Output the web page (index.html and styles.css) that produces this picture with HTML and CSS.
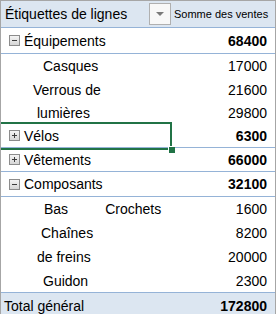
FILE: index.html
```html
<!DOCTYPE html>
<html lang="fr">
<head>
<meta charset="utf-8">
<link rel="stylesheet" href="styles.css">
</head>
<body>
<div class="pivot">
  <div class="row head">
    <div class="lab">Étiquettes de lignes</div>
    <div class="filter"><span class="arrow"></span></div>
    <div class="hval">Somme des ventes</div>
  </div>
  <div class="row grp r25">
    <div class="lab"><span class="tog minus"></span>Équipements</div>
    <div class="val bold">68400</div>
  </div>
  <div class="row r24">
    <div class="lab"><span class="child i42">Casques</span></div>
    <div class="val">17000</div>
  </div>
  <div class="row r23">
    <div class="lab"><span class="child i32">Verrous de</span></div>
    <div class="val">21600</div>
  </div>
  <div class="row r23">
    <div class="lab"><span class="child i36">lumières</span></div>
    <div class="val">29800</div>
  </div>
  <div class="row grp r23 selected">
    <div class="lab"><span class="tog plus"></span>Vélos</div>
    <div class="val bold">6300</div>
    <div class="sel"><span class="handle"></span></div>
  </div>
  <div class="row grp r23">
    <div class="lab"><span class="tog plus"></span>Vêtements</div>
    <div class="val bold">66000</div>
  </div>
  <div class="row grp r24">
    <div class="lab"><span class="tog minus"></span>Composants</div>
    <div class="val bold">32100</div>
  </div>
  <div class="row r24">
    <div class="lab"><span class="child i43">Bas</span><span class="extra">Crochets</span></div>
    <div class="val">1600</div>
  </div>
  <div class="row r24">
    <div class="lab"><span class="child i40">Chaînes</span></div>
    <div class="val">8200</div>
  </div>
  <div class="row r24">
    <div class="lab"><span class="child i36">de freins</span></div>
    <div class="val">20000</div>
  </div>
  <div class="row r23">
    <div class="lab"><span class="child i42">Guidon</span></div>
    <div class="val">2300</div>
  </div>
  <div class="row total">
    <div class="lab">Total général</div>
    <div class="val bold">172800</div>
  </div>
</div>
</body>
</html>
```

FILE: styles.css
```css
html, body {
  margin: 0;
  padding: 0;
  background: #ffffff;
}
.pivot {
  width: 274px;
  height: 313px;
  border-top: 1px solid #a6a6a6;
  border-left: 1px solid #a6a6a6;
  border-right: 1px solid #a6a6a6;
  font-family: "Liberation Sans", Arial, sans-serif;
  font-size: 14px;
  color: #000000;
  display: flex;
  flex-direction: column;
  overflow: hidden;
}
.row {
  display: flex;
  align-items: center;
  position: relative;
  flex-shrink: 0;
}
.r23 { height: 23px; }
.r24 { height: 24px; }
.r25 { height: 25px; }
.grp {
  border-bottom: 1px solid #95b3d7;
}
.head {
  height: 26px;
  background: #dce6f1;
  border-bottom: 1px solid #95b3d7;
}
.head .lab {
  padding-left: 4px;
  width: 144px;
  flex: none;
}
.filter {
  width: 20px;
  height: 20px;
  border: 1px solid #b0b0b0;
  background: #f8f8f8;
  box-sizing: content-box;
  display: flex;
  align-items: center;
  justify-content: center;
  flex: none;
}
.arrow {
  width: 0;
  height: 0;
  border-left: 4px solid transparent;
  border-right: 4px solid transparent;
  border-top: 4px solid #7a7a7a;
}
.hval {
  font-size: 11px;
  padding-left: 3px;
  white-space: nowrap;
}
.lab {
  flex: 1;
  display: flex;
  align-items: center;
  white-space: nowrap;
  position: relative;
  height: 100%;
}
.grp .lab {
  padding-left: 8px;
}
.tog {
  width: 9px;
  height: 9px;
  border: 1px solid #8c8c8c;
  background: linear-gradient(#f4f4f4, #d6d6d6);
  position: relative;
  margin-right: 4px;
  flex: none;
}
.tog::before {
  content: "";
  position: absolute;
  left: 2px;
  top: 4px;
  width: 5px;
  height: 1px;
  background: #3c3c3c;
}
.plus::after {
  content: "";
  position: absolute;
  left: 4px;
  top: 2px;
  width: 1px;
  height: 5px;
  background: #3c3c3c;
}
.child { display: inline-block; }
.i32 { padding-left: 32px; }
.i36 { padding-left: 36px; }
.i40 { padding-left: 40px; }
.i42 { padding-left: 42px; }
.i43 { padding-left: 43px; }
.extra {
  padding-left: 37px;
}
.val {
  padding-right: 8px;
  text-align: right;
  flex: none;
}
.bold { font-weight: bold; }
.total {
  flex: 1;
  background: #dce6f1;
  border-top: 1px solid #95b3d7;
  align-items: flex-start;
}
.total .lab {
  padding-left: 3px;
  align-items: flex-start;
  padding-top: 5px;
}
.total .val {
  padding-top: 5px;
}
.sel {
  position: absolute;
  left: -1px;
  top: -2px;
  width: 170px;
  height: 24px;
  border-top: 2px solid #217346;
  border-right: 2px solid #217346;
  border-bottom: 2px solid #217346;
  pointer-events: none;
}
.handle {
  position: absolute;
  right: -5px;
  bottom: -5px;
  width: 6px;
  height: 6px;
  background: #217346;
  border: 1px solid #ffffff;
  border-right: none;
  border-bottom: none;
}
```
